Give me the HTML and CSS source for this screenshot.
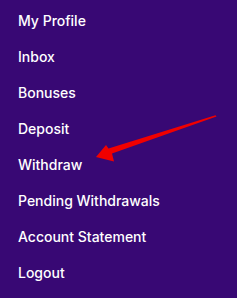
FILE: index.html
```html
<!DOCTYPE html>
<html>
<head>
<meta charset="utf-8">
<link rel="stylesheet" href="styles.css">
</head>
<body>
<nav class="menu">
  <ul class="menu-list">
    <li class="menu-item">My Profile</li>
    <li class="menu-item">Inbox</li>
    <li class="menu-item">Bonuses</li>
    <li class="menu-item">Deposit</li>
    <li class="menu-item">Withdraw</li>
    <li class="menu-item">Pending Withdrawals</li>
    <li class="menu-item">Account Statement</li>
    <li class="menu-item">Logout</li>
  </ul>
  <svg class="arrow" width="237" height="298" viewBox="0 0 237 298">
    <path d="M216.5 116.5 L112 153.5 L114 161.5 L96 157 L106 145 L108.5 148.5 L215.5 115.3 Z" fill="#f10000"/>
  </svg>
</nav>
</body>
</html>
```
FILE: styles.css
```css
html, body {
  margin: 0;
  padding: 0;
  background: #380874;
}
.menu {
  position: relative;
  width: 237px;
  height: 298px;
  overflow: hidden;
}
.menu-list {
  list-style: none;
  margin: 0;
  padding: 3px 0 0 18px;
}
.menu-item {
  height: 36px;
  line-height: 36px;
  font-family: Inter, "Noto Sans", sans-serif;
  font-weight: 500;
  font-size: 14px;
  color: #ffffff;
}
.arrow {
  position: absolute;
  left: 0;
  top: 0;
}
```
